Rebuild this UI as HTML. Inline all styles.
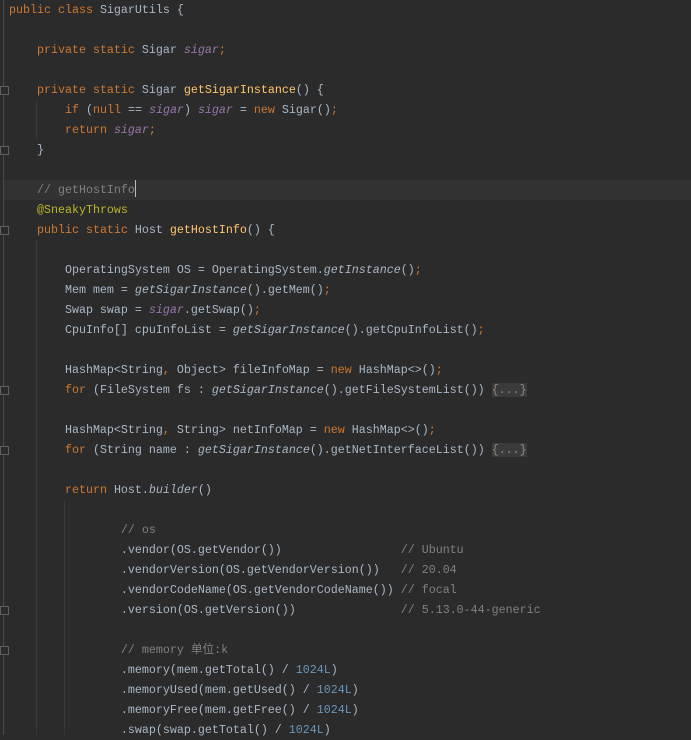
<!DOCTYPE html>
<html><head><meta charset="utf-8"><style>
html,body{margin:0;padding:0;background:#2b2b2b;width:691px;height:735px;overflow:hidden}
.g{position:absolute;left:3px;top:0;width:1px;height:735px;background:#4a4a4a}
.ig{position:absolute;width:1px;background:#393939}
.hl{position:absolute;left:4px;top:180px;width:687px;height:20px;background:#323232}
pre{position:absolute;left:9px;top:0;margin:0;font-family:"Liberation Mono","Noto Sans CJK SC",monospace;font-size:11.67px;line-height:20px;color:#a9b7c6;white-space:pre}
.k{color:#cc7832}.f{color:#9876aa;font-style:italic}.m{color:#ffc66d}.c{color:#808080}.a{color:#bbb529}.n{color:#6897bb}.i{font-style:italic}
.fold{background:#3b3b3b;color:#8c8c8c}
.cur{display:inline-block;width:1px;height:17px;background:#bbbbbb;vertical-align:-4px}
.fm{position:absolute;left:0;width:7px;height:7px;border:1px solid #606060;background:#2b2b2b}
</style></head><body>
<div class="hl"></div>
<div class="g"></div>
<div class="ig" style="left:36px;top:100px;height:40px"></div>
<div class="ig" style="left:36px;top:240px;height:495px"></div>
<div class="ig" style="left:64px;top:500px;height:235px"></div>
<div class="fm" style="top:86px"></div>
<div class="fm" style="top:146px"></div>
<div class="fm" style="top:226px"></div>
<div class="fm" style="top:386px"></div>
<div class="fm" style="top:446px"></div>
<div class="fm" style="top:606px"></div>
<div class="fm" style="top:646px"></div>
<pre><span class="k">public class </span>SigarUtils {

    <span class="k">private static </span>Sigar <span class="f">sigar</span><span class="k">;</span>

    <span class="k">private static </span>Sigar <span class="m">getSigarInstance</span>() {
        <span class="k">if </span>(<span class="k">null </span>== <span class="f">sigar</span>) <span class="f">sigar </span>= <span class="k">new </span>Sigar()<span class="k">;</span>
        <span class="k">return </span><span class="f">sigar</span><span class="k">;</span>
    }

    <span class="c">// getHostInfo</span><span class="cur"></span>
    <span class="a">@SneakyThrows</span>
    <span class="k">public static </span>Host <span class="m">getHostInfo</span>() {

        OperatingSystem OS = OperatingSystem.<span class="i">getInstance</span>()<span class="k">;</span>
        Mem mem = <span class="i">getSigarInstance</span>().getMem()<span class="k">;</span>
        Swap swap = <span class="f">sigar</span>.getSwap()<span class="k">;</span>
        CpuInfo[] cpuInfoList = <span class="i">getSigarInstance</span>().getCpuInfoList()<span class="k">;</span>

        HashMap&lt;String<span class="k">, </span>Object&gt; fileInfoMap = <span class="k">new </span>HashMap&lt;&gt;()<span class="k">;</span>
        <span class="k">for </span>(FileSystem fs : <span class="i">getSigarInstance</span>().getFileSystemList()) <span class="fold">{...}</span>

        HashMap&lt;String<span class="k">, </span>String&gt; netInfoMap = <span class="k">new </span>HashMap&lt;&gt;()<span class="k">;</span>
        <span class="k">for </span>(String name : <span class="i">getSigarInstance</span>().getNetInterfaceList()) <span class="fold">{...}</span>

        <span class="k">return </span>Host.<span class="i">builder</span>()

                <span class="c">// os</span>
                .vendor(OS.getVendor())                 <span class="c">// Ubuntu</span>
                .vendorVersion(OS.getVendorVersion())   <span class="c">// 20.04</span>
                .vendorCodeName(OS.getVendorCodeName()) <span class="c">// focal</span>
                .version(OS.getVersion())               <span class="c">// 5.13.0-44-generic</span>

                <span class="c">// memory 单位:k</span>
                .memory(mem.getTotal() / <span class="n">1024L</span>)
                .memoryUsed(mem.getUsed() / <span class="n">1024L</span>)
                .memoryFree(mem.getFree() / <span class="n">1024L</span>)
                .swap(swap.getTotal() / <span class="n">1024L</span>)
</pre>
</body></html>
